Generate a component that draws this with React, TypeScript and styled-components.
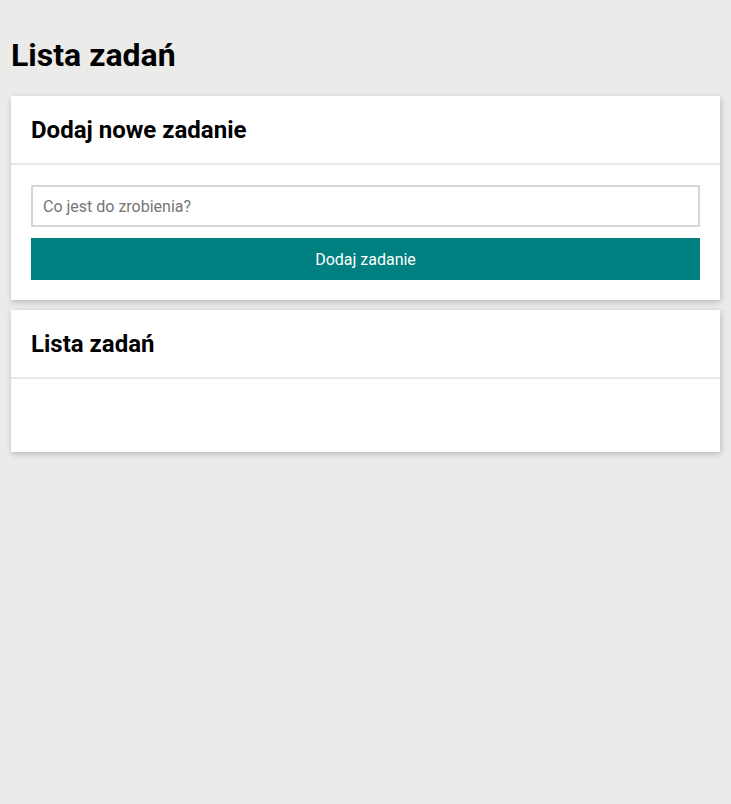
import React from "react";
import styled, { createGlobalStyle } from "styled-components";

const Global = createGlobalStyle`
  html, body { margin: 0; padding: 0; background: #ebebe9; }
  body { font-family: Roboto, "Liberation Sans", sans-serif; color: #000; }
  * { box-sizing: border-box; }
`;

const Page = styled.div`
  padding: 0 11px 30px;
  display: flex;
  flex-direction: column;
  gap: 10px;
`;

const Title = styled.h1`
  margin: 36px 0 12px;
  font-size: 32px;
  font-weight: 700;
  line-height: 38px;
`;

const Card = styled.section`
  background: #fff;
  box-shadow: 1px 2px 6px rgba(0, 0, 0, 0.22);
`;

const CardHeader = styled.div`
  padding: 20px 20px 19px;
  border-bottom: 2px solid #e8e8e8;
`;

const CardTitle = styled.h2`
  margin: 0;
  font-size: 24px;
  font-weight: 700;
  line-height: 28px;
`;

const CardBody = styled.div<{ $empty?: boolean }>`
  padding: 20px;
  display: flex;
  flex-direction: column;
  gap: 11px;
  min-height: ${(p) => (p.$empty ? "73px" : "auto")};
`;

const Input = styled.input`
  height: 42px;
  width: 100%;
  border: 2px solid #d6d6d6;
  padding: 0 10px;
  font-family: inherit;
  font-size: 16px;
  outline: none;
  &::placeholder { color: #757575; }
`;

const Button = styled.button`
  height: 42px;
  width: 100%;
  border: none;
  background: #008080;
  color: #fff;
  font-family: inherit;
  font-size: 16px;
  cursor: pointer;
`;

export default function App() {
  return (
    <>
      <Global />
      <Page>
        <Title>Lista zadań</Title>
        <Card>
          <CardHeader>
            <CardTitle>Dodaj nowe zadanie</CardTitle>
          </CardHeader>
          <CardBody>
            <Input placeholder="Co jest do zrobienia?" />
            <Button>Dodaj zadanie</Button>
          </CardBody>
        </Card>
        <Card>
          <CardHeader>
            <CardTitle>Lista zadań</CardTitle>
          </CardHeader>
          <CardBody $empty />
        </Card>
      </Page>
    </>
  );
}
